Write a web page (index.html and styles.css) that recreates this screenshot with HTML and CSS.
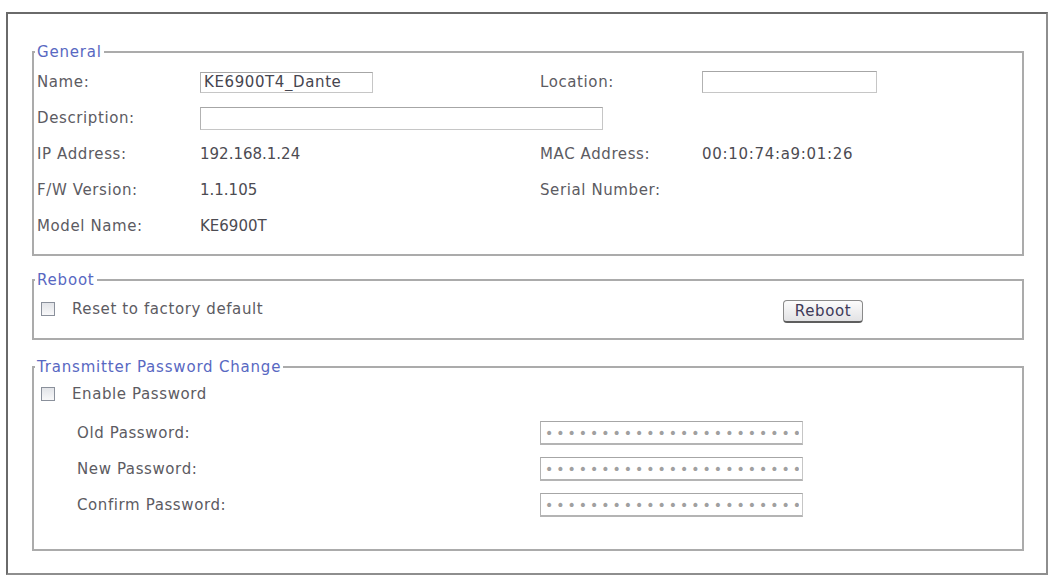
FILE: index.html
```html
<!DOCTYPE html>
<html lang="en">
<head>
    <meta charset="UTF-8">
    <title>Device Settings</title>
    <link rel="stylesheet" href="styles.css">
</head>
<body>

<div class="panel">
    <fieldset class="group general">
        <legend>General</legend>
        <div class="info-grid">
            <label for="nameInput">Name:</label>
            <div><input type="text" id="nameInput" class="txt name-input" value="KE6900T4_Dante"></div>
            <label for="locationInput">Location:</label>
            <div><input type="text" id="locationInput" class="txt location-input"></div>

            <label for="descInput">Description:</label>
            <div class="wide"><input type="text" id="descInput" class="txt desc-input"></div>

            <span>IP Address:</span>
            <span class="val">192.168.1.24</span>
            <span>MAC Address:</span>
            <span class="val mac">00:10:74:a9:01:26</span>

            <span>F/W Version:</span>
            <span class="val">1.1.105</span>
            <span>Serial Number:</span>
            <span class="val"></span>

            <span>Model Name:</span>
            <span class="val">KE6900T</span>
        </div>
    </fieldset>

    <fieldset class="group reboot">
        <legend>Reboot</legend>
        <div class="reboot-row">
            <label class="check"><input type="checkbox" class="box"> Reset to factory default</label>
            <button type="button" class="btn">Reboot</button>
        </div>
    </fieldset>

    <fieldset class="group password">
        <legend>Transmitter Password Change</legend>
        <div class="check-row">
            <label class="check"><input type="checkbox" class="box"> Enable Password</label>
        </div>
        <div class="pass-grid">
            <label for="oldPass">Old Password:</label>
            <div><input type="password" id="oldPass" class="txt pass-input" value="xxxxxxxxxxxxxxxxxxxxxxxxxxxxxxxxxxxxxxxx"></div>
            <label for="newPass">New Password:</label>
            <div><input type="password" id="newPass" class="txt pass-input" value="xxxxxxxxxxxxxxxxxxxxxxxxxxxxxxxxxxxxxxxx"></div>
            <label for="confirmPass">Confirm Password:</label>
            <div><input type="password" id="confirmPass" class="txt pass-input" value="xxxxxxxxxxxxxxxxxxxxxxxxxxxxxxxxxxxxxxxx"></div>
        </div>
    </fieldset>
</div>

</body>
</html>
```

FILE: styles.css
```css
body {
    margin: 0;
    background-color: #fff;
    font-family: "DejaVu Sans", Verdana, sans-serif;
    font-size: 15px;
    letter-spacing: 0.6px;
    color: #5c5b62;
}
.panel {
    box-sizing: border-box;
    width: 1042px;
    margin: 12px 0 0 6px;
    padding: 30px 22px 22px 24px;
    border: 2px solid #8e8e8e;
    border-top-color: #6a6a6a;
    border-left-color: #6a6a6a;
}
.group {
    margin: 0;
    padding: 4px 3px 10px 3px;
    border: 2px solid #ababab;
    min-width: 0;
}
.group legend {
    margin-left: -2px;
    padding: 0 2px;
    line-height: 16px;
    letter-spacing: 0.8px;
    color: #5868c2;
}
.reboot {
    margin-top: 16px;
    padding-top: 3px;
    padding-bottom: 11px;
}
.password {
    margin-top: 19px;
    padding-top: 1px;
    padding-bottom: 26px;
}
.info-grid {
    display: grid;
    grid-template-columns: 163px 340px 162px 1fr;
    grid-auto-rows: 36px;
    align-items: center;
}
.info-grid .wide {
    grid-column: 2 / 5;
}
.val {
    letter-spacing: 0;
    color: #4c4b52;
}
.val.mac {
    letter-spacing: 0.7px;
}
.txt {
    box-sizing: border-box;
    margin: 0;
    padding: 0 3px;
    font-family: inherit;
    font-size: 15px;
    letter-spacing: 0.6px;
    color: #46454f;
    border: 1px solid #c6c6c6;
    border-top-color: #a6a6a6;
    border-left-color: #b2b2b2;
    background: #fff;
}
.name-input {
    width: 173px;
    height: 21px;
}
.location-input {
    width: 175px;
    height: 22px;
}
.desc-input {
    width: 403px;
    height: 23px;
}
.check {
    display: flex;
    align-items: center;
}
.box {
    appearance: none;
    width: 14px;
    height: 14px;
    margin: 0 17px 0 4px;
    border: 1px solid #8a909b;
    background: linear-gradient(#e2e4e8, #f8f8f9);
}
.reboot-row {
    display: grid;
    grid-template-columns: 746px auto;
    height: 36px;
    align-items: center;
}
.btn {
    width: 80px;
    height: 23px;
    margin-top: 4px;
    padding: 0;
    font-family: inherit;
    font-size: 15px;
    letter-spacing: 0.6px;
    color: #3e3a58;
    border: 1px solid #8a8a8a;
    border-bottom: 2px solid #5e5e5e;
    border-radius: 4px;
    background: linear-gradient(#fcfcfc, #e2e2e4);
}
.check-row {
    height: 36px;
    display: flex;
    align-items: center;
}
.pass-grid {
    display: grid;
    grid-template-columns: 463px auto;
    grid-auto-rows: 36px;
    align-items: center;
    margin-top: 3px;
    padding-left: 40px;
}
.pass-input {
    width: 263px;
    height: 24px;
    padding-left: 4px;
    font-size: 14px;
    letter-spacing: 3px;
    color: #a0a0a0;
    border-bottom: 2px solid #b4b4b4;
}
```
